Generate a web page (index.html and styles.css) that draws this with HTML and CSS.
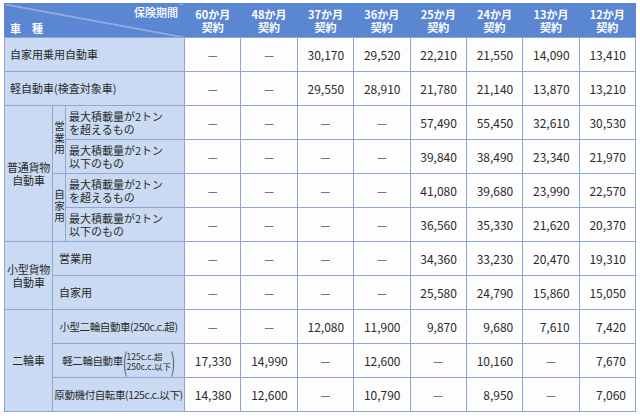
FILE: index.html
```html
<!DOCTYPE html>
<html lang="ja">
<head>
<meta charset="utf-8">
<link rel="stylesheet" href="styles.css">
</head>
<body>
<table class="rates">
  <colgroup>
    <col class="c-g"><col class="c-s"><col class="c-l">
    <col class="c-n"><col class="c-n"><col class="c-n"><col class="c-n">
    <col class="c-n"><col class="c-n"><col class="c-n"><col class="c-n">
  </colgroup>
  <thead>
    <tr>
      <th colspan="3" class="diag"><span class="d-top">保険期間</span><span class="d-bot">車　種</span></th>
      <th>60か月<br>契約</th><th>48か月<br>契約</th><th>37か月<br>契約</th><th>36か月<br>契約</th>
      <th>25か月<br>契約</th><th>24か月<br>契約</th><th>13か月<br>契約</th><th>12か月<br>契約</th>
    </tr>
  </thead>
  <tbody>
    <tr>
      <td colspan="3" class="lbl">自家用乗用自動車</td>
      <td class="dash">—</td><td class="dash">—</td><td class="num">30,170</td><td class="num">29,520</td>
      <td class="num">22,210</td><td class="num">21,550</td><td class="num">14,090</td><td class="num">13,410</td>
    </tr>
    <tr>
      <td colspan="3" class="lbl">軽自動車(検査対象車)</td>
      <td class="dash">—</td><td class="dash">—</td><td class="num">29,550</td><td class="num">28,910</td>
      <td class="num">21,780</td><td class="num">21,140</td><td class="num">13,870</td><td class="num">13,210</td>
    </tr>
    <tr>
      <td rowspan="4" class="grp">普通貨物<br>自動車</td>
      <td rowspan="2" class="vert"><span class="vtext">営業用</span></td>
      <td class="lbl sub">最大積載量が2トン<br>を超えるもの</td>
      <td class="dash">—</td><td class="dash">—</td><td class="dash">—</td><td class="dash">—</td>
      <td class="num">57,490</td><td class="num">55,450</td><td class="num">32,610</td><td class="num">30,530</td>
    </tr>
    <tr>
      <td class="lbl sub">最大積載量が2トン<br>以下のもの</td>
      <td class="dash">—</td><td class="dash">—</td><td class="dash">—</td><td class="dash">—</td>
      <td class="num">39,840</td><td class="num">38,490</td><td class="num">23,340</td><td class="num">21,970</td>
    </tr>
    <tr>
      <td rowspan="2" class="vert"><span class="vtext">自家用</span></td>
      <td class="lbl sub">最大積載量が2トン<br>を超えるもの</td>
      <td class="dash">—</td><td class="dash">—</td><td class="dash">—</td><td class="dash">—</td>
      <td class="num">41,080</td><td class="num">39,680</td><td class="num">23,990</td><td class="num">22,570</td>
    </tr>
    <tr>
      <td class="lbl sub">最大積載量が2トン<br>以下のもの</td>
      <td class="dash">—</td><td class="dash">—</td><td class="dash">—</td><td class="dash">—</td>
      <td class="num">36,560</td><td class="num">35,330</td><td class="num">21,620</td><td class="num">20,370</td>
    </tr>
    <tr>
      <td rowspan="2" class="grp">小型貨物<br>自動車</td>
      <td colspan="2" class="lbl sm">営業用</td>
      <td class="dash">—</td><td class="dash">—</td><td class="dash">—</td><td class="dash">—</td>
      <td class="num">34,360</td><td class="num">33,230</td><td class="num">20,470</td><td class="num">19,310</td>
    </tr>
    <tr>
      <td colspan="2" class="lbl sm">自家用</td>
      <td class="dash">—</td><td class="dash">—</td><td class="dash">—</td><td class="dash">—</td>
      <td class="num">25,580</td><td class="num">24,790</td><td class="num">15,860</td><td class="num">15,050</td>
    </tr>
    <tr>
      <td rowspan="3" class="grp">二輪車</td>
      <td colspan="2" class="lbl ctr">小型二輪自動車(250c.c.超)</td>
      <td class="dash">—</td><td class="dash">—</td><td class="num">12,080</td><td class="num">11,900</td>
      <td class="num">9,870</td><td class="num">9,680</td><td class="num">7,610</td><td class="num">7,420</td>
    </tr>
    <tr>
      <td colspan="2" class="lbl ctr"><span class="kei">軽二輪自動車<span class="paren">(</span><span class="tiny">125c.c.超<br>250c.c.以下</span><span class="paren">)</span></span></td>
      <td class="num">17,330</td><td class="num">14,990</td><td class="dash">—</td><td class="num">12,600</td>
      <td class="dash">—</td><td class="num">10,160</td><td class="dash">—</td><td class="num">7,670</td>
    </tr>
    <tr>
      <td colspan="2" class="lbl ctr">原動機付自転車(125c.c.以下)</td>
      <td class="num">14,380</td><td class="num">12,600</td><td class="dash">—</td><td class="num">10,790</td>
      <td class="dash">—</td><td class="num">8,950</td><td class="dash">—</td><td class="num">7,060</td>
    </tr>
  </tbody>
</table>
</body>
</html>
```
FILE: styles.css
```css
html, body {
  margin: 0;
  padding: 0;
  background: #ffffff;
}
body {
  padding: 3px 0 0 4px;
  font-family: "Noto Sans CJK JP", "Noto Sans", sans-serif;
  color: #2b2b2b;
}
.rates {
  border-collapse: collapse;
  table-layout: fixed;
  width: 631px;
}
.c-g { width: 48px; }
.c-s { width: 13px; }
.c-l { width: 119px; }
.c-n { width: 56.375px; }

.rates tr {
  height: 34px;
}
.rates th, .rates td {
  border: 1px solid #8ea5d6;
  padding: 0;
}
.rates thead th {
  background: #5b86d1;
  color: #ffffff;
  font-size: 11px;
  font-weight: 700;
  line-height: 13px;
  text-align: center;
  border-color: #5b86d1;
  border-left-color: #a9c0ea;
  border-bottom-color: #8ea5d6;
}
.rates thead th.diag {
  border-left-color: #5b86d1;
  background:
    linear-gradient(to top right, transparent calc(50% - 0.8px), rgba(225, 235, 252, 0.85) 50%, transparent calc(50% + 0.8px)),
    #5b86d1;
  text-align: left;
  vertical-align: top;
  padding: 2px 6px 0 5px;
  font-weight: 500;
}
.d-top {
  display: block;
  text-align: right;
}
.d-bot {
  display: block;
  margin-top: 3px;
  font-weight: 700;
}
.rates td {
  background: #fdfdfd;
  font-size: 12px;
  line-height: 14px;
}
.rates td.num {
  text-align: right;
  padding-right: 9px;
}
.rates td.dash {
  text-align: center;
  color: #555;
  font-size: 11px;
}
.rates td.lbl, .rates td.grp, .rates td.vert {
  background: #c9daf2;
  font-size: 11px;
  line-height: 13px;
}
.rates td.lbl {
  padding-left: 5px;
  text-align: left;
  white-space: nowrap;
}
.rates td.sub {
  padding-left: 3px;
}
.rates td.sm {
  padding-left: 6px;
}
.rates td.ctr {
  padding-left: 0;
  text-align: center;
  font-size: 10.5px;
  letter-spacing: -0.4px;
}
.rates td.grp {
  text-align: center;
  letter-spacing: -0.2px;
}
.rates td.vert {
  text-align: center;
  font-size: 10.5px;
  overflow: hidden;
}
.vtext {
  display: inline-block;
  writing-mode: vertical-rl;
  text-orientation: upright;
  letter-spacing: 1px;
  line-height: 12px;
}
.kei {
  display: inline-flex;
  align-items: center;
}
.paren {
  font-size: 26px;
  line-height: 24px;
  transform: scaleX(0.55);
  font-weight: 300;
  margin: 0 -2px;
}
.tiny {
  font-size: 8.5px;
  line-height: 10px;
  text-align: left;
  letter-spacing: 0;
}
```
